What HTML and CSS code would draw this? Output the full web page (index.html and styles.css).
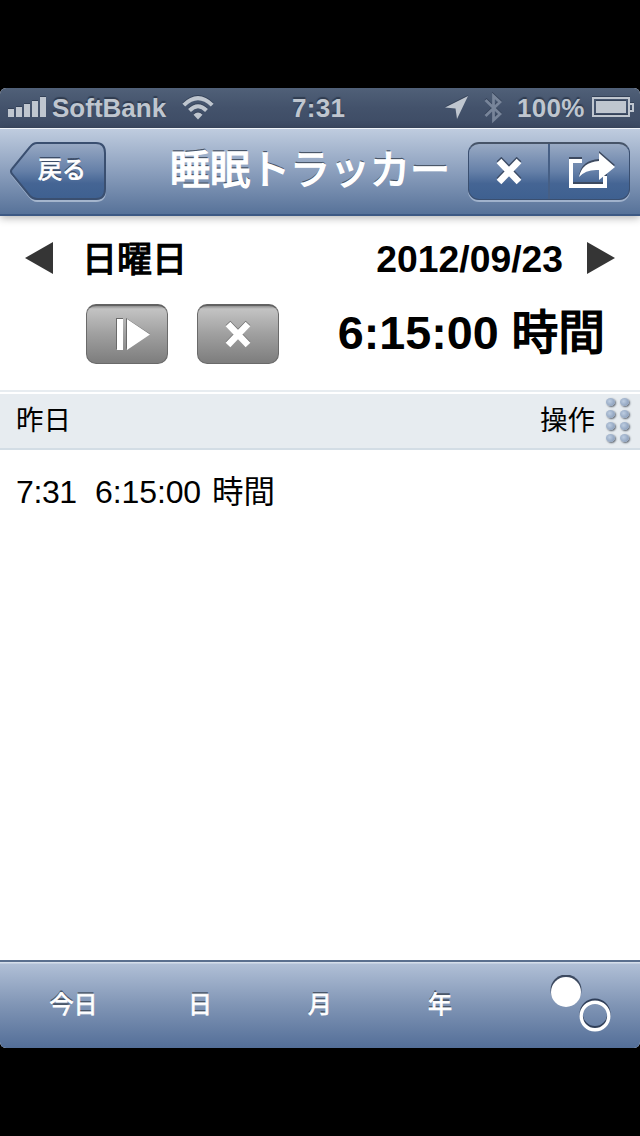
FILE: index.html
```html
<!DOCTYPE html>
<html lang="ja">
<head>
    <meta charset="UTF-8">
    <title>睡眠トラッカー</title>
    <link rel="stylesheet" href="styles.css">
</head>
<body>

<div id="phone">
    <div class="status-bar">
        <svg class="signal" width="38" height="20" viewBox="0 0 38 20">
            <path d="M0 12h6v8H0zM8 10h6v10H8zM16 7h6v13h-6zM24 4h6v16h-6zM32 0h6v20h-6z"/>
        </svg>
        <span class="carrier">SoftBank</span>
        <svg class="wifi" width="32" height="24" viewBox="0 0 32 24">
            <path class="wave" d="M1.8 9.2Q16-4.8 30.200 9.200M7.500 14.500Q16 6 24.500 14.500"/>
            <path d="M16 23.500L11.500 18.800Q16 14.400 20.500 18.800z"/>
        </svg>
        <span class="clock">7:31</span>
        <svg class="location" width="24" height="24" viewBox="0 0 24 24">
            <path d="M23 0L12 23L10.500 12.500L0 11.500z"/>
        </svg>
        <svg class="bluetooth" width="18" height="32" viewBox="0 0 18 32">
            <path d="M1.500 8L16 22L9.500 28V4L16 10L1.500 24"/>
        </svg>
        <span class="percent">100%</span>
        <svg class="battery" width="42" height="20" viewBox="0 0 42 20">
            <path class="case" d="M1 1h36v18H1z"/>
            <path d="M4 4h30v12H4z"/>
            <path class="case" d="M38 7h3v7h-3"/>
        </svg>
    </div>

    <div class="nav-bar">
        <div class="back">
            <svg width="98" height="62" viewBox="0 0 98 62">
                <defs>
                    <linearGradient id="blue" x1="0" y1="0" x2="0" y2="1">
                        <stop offset="0" stop-color="#99aac4"/>
                        <stop offset="0.5" stop-color="#6580a8"/>
                        <stop offset="0.72" stop-color="#456594"/>
                        <stop offset="1" stop-color="#3e6090"/>
                    </linearGradient>
                </defs>
                <path class="back-light" d="M27 2H86Q95 2 95 12V49Q95 59 86 59H27Q23 59 20 55L3 34Q0 31 3 28L20 6Q23 2 27 2z"/>
                <path class="back-shape" d="M27 1H86Q95 1 95 11V47Q95 57 86 57H27Q23 57 20 54L2 32Q0 29 2 27L20 5Q23 1 27 1z"/>
            </svg>
            <span>戻る</span>
        </div>
        <h1>睡眠トラッカー</h1>
        <div class="segments">
            <div class="segment">
                <svg width="28" height="30" viewBox="0 0 28 30">
                    <path class="cross-shadow" d="M4 2L24 23M24 2L4 23"/>
                    <path class="cross" d="M4 4L24 25M24 4L4 25"/>
                </svg>
            </div>
            <div class="segment">
                <svg class="share" width="48" height="40" viewBox="0 0 48 40">
                    <g transform="translate(0 -2)">
                        <path class="dark-line" d="M14 11H3V36H37V26"/>
                        <path class="dark" d="M11 27Q14 12 31 11V3L47 17L31 30V20Q18 19 11 27z"/>
                    </g>
                    <path class="light-line" d="M14 11H3V36H37V26"/>
                    <path class="light" d="M11 27Q14 12 31 11V3L47 17L31 30V20Q18 19 11 27z"/>
                </svg>
            </div>
        </div>
    </div>

    <div class="summary">
        <div class="date-row">
            <svg class="arrow" width="28" height="32" viewBox="0 0 28 32"><path d="M28 0V32L0 16z"/></svg>
            <span class="weekday">日曜日</span>
            <b class="date">2012/09/23</b>
            <svg class="arrow" width="28" height="32" viewBox="0 0 28 32"><path d="M0 0V32L28 16z"/></svg>
        </div>
        <div class="time-row">
            <div class="gray-button">
                <svg class="play" width="35" height="34" viewBox="0 0 35 34">
                    <path class="gray-shadow" d="M0 0h7v31H0zM10 0L34 16L10 31z"/>
                    <path class="light" d="M1 1h6v31H1zM11 1L34 16.500L11 32z"/>
                </svg>
            </div>
            <div class="gray-button">
                <svg width="28" height="30" viewBox="0 0 28 30">
                    <path class="cross-gray" d="M4 3L24 24M24 3L4 24"/>
                    <path class="cross" d="M4 4L24 25M24 4L4 25"/>
                </svg>
            </div>
            <b class="total">6:15:00 <span>時間</span></b>
        </div>
    </div>

    <div class="list-header">
        <span>昨日</span>
        <span class="action">操作</span>
        <div class="grip">
            <i></i><i></i><i></i><i></i><i></i><i></i><i></i><i></i>
        </div>
    </div>
    <div class="list">
        <div class="list-row"><span class="at">7:31</span><span class="length">6:15:00</span><span>時間</span></div>
    </div>

    <div class="toolbar">
        <span>今日</span>
        <span>日</span>
        <span>月</span>
        <span>年</span>
        <svg width="62" height="60" viewBox="0 0 62 60">
            <circle class="dark" cx="16" cy="15" r="15.500"/>
            <circle class="light" cx="16" cy="17" r="15"/>
            <circle class="ring-dark" cx="45" cy="39" r="13.800"/>
            <circle class="ring" cx="45" cy="41" r="13.800"/>
        </svg>
    </div>
</div>

</body>
</html>
```

FILE: styles.css
```css
body {
    margin: 0;
    padding: 88px 0;
    background: #000;
    font-family: "Liberation Sans", "Noto Sans CJK JP", sans-serif;
}
svg { display: block; flex: none; }
#phone {
    display: flex;
    flex-direction: column;
    width: 640px;
    height: 960px;
    background: #fff;
    border-radius: 6px;
    overflow: hidden;
}

/* status bar */
.status-bar {
    display: flex;
    align-items: center;
    height: 40px;
    padding: 0 6px 0 8px;
    box-sizing: border-box;
    background: linear-gradient(#506078, #43526b 50%, #3d4b64);
    color: #bfc6cf;
    fill: #bfc6cf;
    font-size: 26px;
    font-weight: bold;
    line-height: 40px;
    text-shadow: 0 -2px 1px #303c50;
    white-space: nowrap;
}
.status-bar svg { filter: drop-shadow(0 -1px 0 #344157); }
.signal { margin-top: -2px; }
.carrier { width: 114px; margin-left: 6px; }
.wifi { margin-left: 16px; }
.wave { fill: none; stroke: #bfc6cf; stroke-width: 4; }
.clock { width: 52px; margin-left: 78px; letter-spacing: 0.3px; }
.location { margin-left: 101px; }
.bluetooth { margin-left: 15px; fill: none; stroke: #78859a; stroke-width: 2.8; }
.percent { width: 68px; margin-left: 15px; letter-spacing: 0.3px; }
.battery { margin-left: auto; margin-top: -2px; }
.case { fill: none; stroke: #bfc6cf; stroke-width: 2; }

/* navigation bar */
.nav-bar {
    position: relative;
    display: flex;
    align-items: flex-start;
    height: 88px;
    padding: 14px 10px 0;
    box-sizing: border-box;
    border-top: 1px solid #f0f4f9;
    border-bottom: 2px solid #3d5984;
    background: linear-gradient(#bfccdf, #8b9fbd 50%, #577299);
    box-shadow: 0 2px 8px rgba(0, 0, 0, 0.3);
    color: #fff;
}
.nav-bar, .toolbar {
    text-shadow: 0 -2px 0 #4a5769;
    -webkit-text-stroke: 0.8px #fff;
}
.back { position: relative; width: 96px; height: 60px; margin-top: -1px; }
.back span {
    position: absolute;
    left: 28px;
    top: 12px;
    font-size: 24px;
    line-height: 32px;
    text-shadow: 0 -2px 0 #3c4d68;
}
.back-light { fill: none; stroke: #a4b5cd; stroke-width: 2; }
.back-shape { fill: url(#blue); stroke: #3a4f70; stroke-width: 2; }
h1 {
    width: 282px;
    margin: 0 0 0 64px;
    font-size: 40px;
    font-weight: normal;
    line-height: 54px;
    white-space: nowrap;
    -webkit-text-stroke-width: 1.5px;
}
.segments {
    display: flex;
    width: 162px;
    height: 58px;
    margin: -1px 0 0 16px;
    box-sizing: border-box;
    border: 1px solid #3a4f70;
    border-top: 2px solid #465468;
    border-radius: 11px;
    background: linear-gradient(#99aac4, #6580a8 50%, #456594 72%, #3e6090);
    box-shadow: 0 2px 0 #a0b2cc;
}
.segment {
    display: flex;
    flex: 1;
    align-items: center;
    justify-content: center;
}
.segment + .segment { border-left: 2px solid #465f85; }
.share { margin: -4px 0 0 5px; }
.cross { stroke: #fff; stroke-width: 6.5; }
.cross-shadow { stroke: #3d4c65; stroke-width: 6.5; }
.cross-gray { stroke: #707070; stroke-width: 6.5; }
.light { fill: #fff; }
.dark { fill: #3d4a60; }
.light-line { fill: none; stroke: #fff; stroke-width: 4; }
.dark-line { fill: none; stroke: #3d4a60; stroke-width: 4; }

/* day and total */
.summary { height: 174px; }
.date-row {
    display: flex;
    align-items: center;
    height: 84px;
    padding: 0 25px;
}
.arrow { fill: #353535; }
.weekday {
    margin-left: 29px;
    padding-top: 3px;
    font-size: 35px;
    line-height: 50px;
    -webkit-text-stroke: 1.3px #000;
}
.date { margin-left: auto; margin-right: 24px; font-size: 37.3px; padding-top: 3px; }
.time-row {
    display: flex;
    gap: 29px;
    height: 62px;
    margin-top: 4px;
    padding: 0 35px 0 86px;
}
.gray-button {
    display: flex;
    align-items: center;
    justify-content: center;
    width: 82px;
    height: 60px;
    box-sizing: border-box;
    border: 1px solid #6a6a6a;
    border-top: 2px solid #626262;
    border-radius: 10px;
    background: linear-gradient(#909090, #c3c3c3 3px, #9f9f9f 50%, #7d7d7d);
}
.play { margin-left: 12px; }
.gray-shadow { fill: #6b6b6b; }
.total {
    margin-left: auto;
    font-size: 46.7px;
    line-height: 58px;
    white-space: nowrap;
}
.total span { font-weight: normal; -webkit-text-stroke: 1.7px #000; }

/* entries */
.list-header {
    display: flex;
    align-items: center;
    height: 60px;
    padding: 0 10px 0 16px;
    box-sizing: border-box;
    border-top: 2px solid #e7ecf0;
    border-bottom: 2px solid #d3dde5;
    background: #e7ecf0;
    box-shadow: inset 0 2px 0 #fff;
    font-size: 27.5px;
}
.list-header span { padding-bottom: 4px; }
.action { margin-left: auto; }
.grip {
    display: grid;
    grid-template-columns: 10px 10px;
    gap: 3px 4px;
    margin: 0 0 0 11px;
}
.grip i {
    width: 9px;
    height: 8px;
    margin-bottom: 1px;
    border-radius: 50%;
    background: radial-gradient(circle at 40% 40%, #bdcde1, #8397b4 90%);
    box-shadow: 1px 1px 2px #59616c;
}
.list { flex: 1; }
.list-row {
    display: flex;
    padding: 18px 16px;
    font-size: 32px;
    line-height: 48px;
}
.at { width: 79px; letter-spacing: -0.4px; }
.length { width: 117px; letter-spacing: -0.1px; }
.list-row span:last-child { font-size: 31.5px; }

/* bottom bar */
.toolbar {
    display: grid;
    grid-template-columns: 147px 106px 134px 106px 1fr;
    align-items: center;
    height: 88px;
    box-sizing: border-box;
    border-top: 2px solid #5a6f8e;
    background: linear-gradient(#d5deea 1px, #b0bfd6 2px, #8095b5 50%, #536e98);
    color: #fff;
    font-size: 24px;
    text-align: center;
}
.toolbar span { padding-bottom: 6px; }
.toolbar svg { margin-left: 57px; }
.ring { fill: none; stroke: #fff; stroke-width: 3.4; }
.ring-dark { fill: none; stroke: #2f3e58; stroke-width: 3.4; }
```
